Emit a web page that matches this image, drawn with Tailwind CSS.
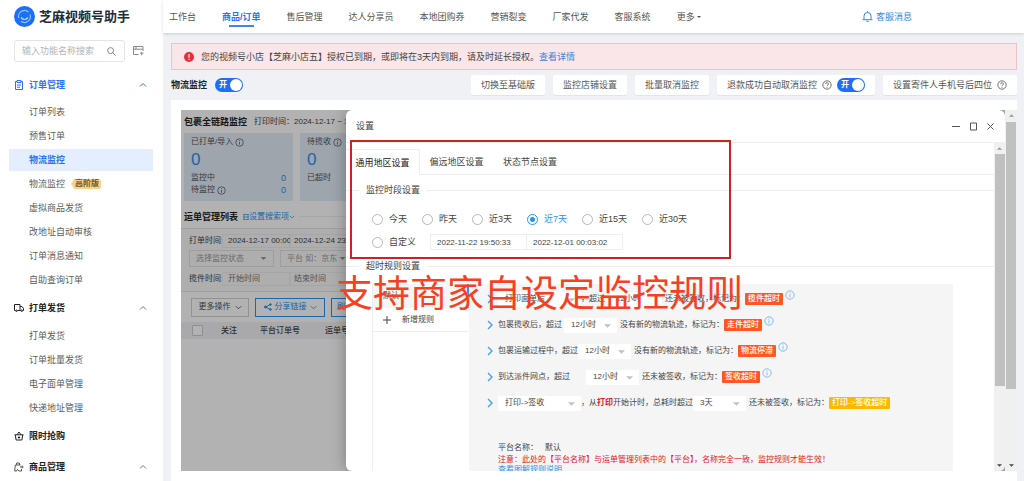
<!DOCTYPE html>
<html>
<head>
<meta charset="utf-8">
<title>芝麻视频号助手</title>
<script src="https://cdn.jsdelivr.net/npm/@tailwindcss/browser@4"></script>
</head>
<body class="bg-[#f0f1f5] font-['Liberation_Sans','Noto_Sans_CJK_SC',sans-serif] text-[9px] leading-[12px] text-[#555]">
<svg class="hidden">
  <symbol id="info" viewBox="0 0 12 12"><circle cx="6" cy="6" r="5" fill="none" stroke="currentColor"/><path d="M6 5.2v3.6M6 3v1.2" stroke="currentColor"/></symbol>
  <symbol id="help" viewBox="0 0 12 12"><circle cx="6" cy="6" r="5" fill="none" stroke="currentColor"/><path d="M4.4 4.9a1.6 1.6 0 1 1 2.3 1.4q-.7.4-.7 1M6 8.3v1" fill="none" stroke="currentColor"/></symbol>
  <symbol id="up" viewBox="0 0 8 8"><path d="M1 5.5 4 2.5 7 5.5" fill="none" stroke="currentColor"/></symbol>
  <symbol id="down" viewBox="0 0 8 8"><path d="M1 2.5 4 5.5 7 2.5" fill="none" stroke="currentColor"/></symbol>
  <symbol id="right" viewBox="0 0 8 10"><path d="M2 1 6 5 2 9" fill="none" stroke="currentColor" stroke-width="1.3"/></symbol>
  <symbol id="caret" viewBox="0 0 8 4"><path d="M0 0h8L4 4z" fill="currentColor"/></symbol>
  <symbol id="caretup" viewBox="0 0 8 4"><path d="M0 4h8L4 0z" fill="currentColor"/></symbol>
</svg>
<div class="flex h-screen overflow-hidden">
  <aside class="flex w-[163px] shrink-0 flex-col bg-white">
    <div class="flex h-[33px] shrink-0 items-center gap-1 pl-[14px]">
      <svg class="size-[21px]" viewBox="0 0 21 21"><circle cx="10.500" cy="10.500" r="10.500" fill="#1f6ff5"/><circle cx="10.500" cy="10.500" r="6" fill="none" stroke="#8fc0ff" stroke-width="1.200" stroke-dasharray="15 4" transform="rotate(-20 10.500 10.500)"/><path d="M7 11.500q3.500 4 7 0" fill="none" stroke="#bcd8ff" stroke-width="1.200"/></svg>
      <h1 class="text-[13px] font-bold leading-4 text-[#222b3a]">芝麻视频号助手</h1>
    </div>
    <div class="mt-[7px] flex shrink-0 items-center gap-2 pl-[14px]">
      <label class="flex h-[22px] w-[111px] items-center rounded-[3px] border border-[#e2e4e8] pr-2 pl-[7px]">
        <input aria-label="搜索" placeholder="输入功能名称搜索" class="min-w-0 flex-1 bg-transparent outline-none placeholder:text-[#b4b4b4]">
        <svg class="size-[9px] text-[#777]" viewBox="0 0 10 10" fill="none" stroke="currentColor"><circle cx="4" cy="4" r="3.300"/><path d="m6.500 6.500 3 3"/></svg>
      </label>
      <button aria-label="收藏"><svg class="h-[10px] w-[11px] text-[#888]" viewBox="0 0 11 10" fill="none" stroke="currentColor"><path d="M5.500 8.500H.5v-8h9.500V5M.5 3.200H10M3 .5v2.700M7 7.200h3.500M8.700 5.800v3.500"/></svg></button>
    </div>
    <nav class="mt-[7px]">
      <button class="flex h-8 w-full items-center pr-4 pl-[14px] font-bold text-[#2b73ee]"><svg class="mr-[5px] size-[10px]" viewBox="0 0 10 10" fill="none" stroke="currentColor"><path d="M3 1.500H1.500v8h7v-8H7M3 .5h4v2H3zM3 5h4M3 7.200h3"/></svg>订单管理<svg class="ml-auto size-2"><use href="#up"/></svg></button>
      <ul class="flex flex-col gap-[2px] pr-[10px] pl-[9px] text-[#5c5c5c]">
        <li><a href="#" class="flex h-[22px] items-center pl-5">订单列表</a></li>
        <li><a href="#" class="flex h-[22px] items-center pl-5">预售订单</a></li>
        <li><a href="#" class="flex h-[22px] items-center bg-[#e5eeff] pl-5 font-bold text-[#2b73ee]">物流监控</a></li>
        <li><a href="#" class="flex h-[22px] items-center pl-5">物流监控<svg class="ml-1.5 h-[6px] w-[2px]" viewBox="0 0 2 6"><path d="M2 0v6L0 3z" fill="#fad28c"/></svg><span class="rounded-[2px] bg-[#fad28c] px-[2px] text-[8px] font-bold leading-[10px] text-[#7a5320]">高阶版</span></a></li>
        <li><a href="#" class="flex h-[22px] items-center pl-5">虚拟商品发货</a></li>
        <li><a href="#" class="flex h-[22px] items-center pl-5">改地址自动审核</a></li>
        <li><a href="#" class="flex h-[22px] items-center pl-5">订单消息通知</a></li>
        <li><a href="#" class="flex h-[22px] items-center pl-5">自助查询订单</a></li>
      </ul>
      <button class="flex h-[34px] w-full items-center pr-4 pl-[14px] font-bold text-[#222]"><svg class="mr-[5px] size-[10px]" viewBox="0 0 10 10" fill="none" stroke="currentColor"><path d="M1.500 7.500H.5v-6h5.500v6H3.500M6 3.500h2l1.500 2v2H8.800M6 7.500h.8"/><circle cx="2.500" cy="7.700" r=".8"/><circle cx="7.700" cy="7.700" r=".8"/></svg>打单发货<svg class="ml-auto size-2 text-[#777]"><use href="#up"/></svg></button>
      <ul class="flex flex-col gap-[2px] pr-[10px] pl-[9px] text-[#5c5c5c]">
        <li><a href="#" class="flex h-[22px] items-center pl-5">打单发货</a></li>
        <li><a href="#" class="flex h-[22px] items-center pl-5">订单批量发货</a></li>
        <li><a href="#" class="flex h-[22px] items-center pl-5">电子面单管理</a></li>
        <li><a href="#" class="flex h-[22px] items-center pl-5">快递地址管理</a></li>
      </ul>
      <button class="flex h-[34px] w-full items-center pr-4 pl-[14px] font-bold text-[#222]"><svg class="mr-[5px] size-[10px]" viewBox="0 0 10 10" fill="none" stroke="currentColor"><path d="M.5 3.800h9M1.300 4l.8 5h5.800l.8-5M3 3.800 5 1l2 2.800M3.800 6.500h2.400M5 5.300v2.400"/></svg>限时抢购</button>
      <button class="flex h-7 w-full items-center pr-4 pl-[14px] font-bold text-[#222]"><svg class="mr-[5px] size-[10px]" viewBox="0 0 10 10" fill="none" stroke="#555"><path d="M6.500 3H1.300L.7 9h1.800l1-1.500L5 9h2.500V7M2.500 3V1h3v2M6 5h3.500M8.200 3.700v2.600"/></svg>商品管理<svg class="ml-auto size-2 text-[#777]"><use href="#up"/></svg></button>
    </nav>
  </aside>

  <div class="flex min-w-0 flex-1 flex-col">
    <header class="flex h-[33px] shrink-0 items-center bg-white pl-[6px] shadow-[0_1px_3px_rgba(0,0,0,0.15)]">
      <nav class="flex h-full items-center gap-[26px] whitespace-nowrap">
        <a href="#">工作台</a>
        <a href="#" class="relative font-bold text-[#2b73ee]">商品/订单<span class="absolute inset-x-[7px] -bottom-[4px] h-[2px] bg-[#3f86e8]"></span></a>
        <a href="#">售后管理</a>
        <a href="#">达人分享员</a>
        <a href="#">本地团购券</a>
        <a href="#">营销裂变</a>
        <a href="#">厂家代发</a>
        <a href="#">客服系统</a>
        <button class="flex items-center gap-[2px]">更多<svg class="h-[2px] w-1"><use href="#caret"/></svg></button>
      </nav>
      <a href="#" class="mr-28 ml-auto flex items-center gap-[3px] text-[#3c82dc]"><svg class="size-[11px]" viewBox="0 0 11 11" fill="none" stroke="currentColor"><path d="M.5 8.700h10M2 8.500V5a3.500 3.500 0 0 1 7 0v3.500M4.300 10.300h2.400M5.500.3v1.200"/></svg>客服消息</a>
    </header>

    <main class="flex min-h-0 flex-1 flex-col pt-[10px] pr-[7px] pl-2">
      <div role="alert" class="flex h-[27px] shrink-0 items-center border border-[#eec3c8] bg-[#fae6e8] pl-3 text-[#444]">
        <svg class="mr-[7px] size-[10px]" viewBox="0 0 10 10"><circle cx="5" cy="5" r="5" fill="#e8303a"/><path d="M5 2v3.800M5 6.800V8" stroke="#fff" stroke-width="1.100"/></svg>
        您的视频号小店【芝麻小店五】授权已到期，或即将在3天内到期，请及时延长授权。<a href="#" class="text-[#3c82dc]">查看详情</a>
      </div>
      <div class="my-[5px] flex h-5 shrink-0 items-center gap-2 text-[#555]">
        <h2 class="font-bold text-[#222]">物流监控</h2>
        <button role="switch" aria-checked="true" aria-label="物流监控" class="flex h-[14px] w-7 items-center justify-between rounded-full bg-[#1f6ff5] pr-[1px] pl-1 text-[8px] font-bold text-white">开<span class="size-3 rounded-full bg-white"></span></button>
        <div class="ml-auto flex gap-[8px]">
          <button class="h-5 rounded-[2px] bg-white px-[10px] shadow-2xs">切换至基础版</button>
          <button class="h-5 rounded-[2px] bg-white px-[10px] shadow-2xs">监控店铺设置</button>
          <button class="h-5 rounded-[2px] bg-white px-[10px] shadow-2xs">批量取消监控</button>
          <div class="flex h-5 items-center gap-[5px] rounded-[2px] bg-white px-[10px] shadow-2xs">退款成功自动取消监控<svg class="size-[10px]"><use href="#help"/></svg>
            <button role="switch" aria-checked="true" aria-label="退款成功自动取消监控" class="flex h-[14px] w-7 items-center justify-between rounded-full bg-[#1f6ff5] pr-[1px] pl-1 text-[8px] font-bold text-white">开<span class="size-3 rounded-full bg-white"></span></button>
          </div>
          <button class="flex h-5 items-center gap-[5px] rounded-[2px] bg-white px-[10px] shadow-2xs">设置寄件人手机号后四位<svg class="size-[10px]"><use href="#help"/></svg></button>
        </div>
      </div>

      <section class="flex min-h-0 flex-1 bg-white py-[10px] pl-[10px]">
        <div class="relative min-w-0 flex-1 overflow-hidden">
          <!-- dashboard behind the dialog -->
          <div class="h-full overflow-hidden bg-white text-[8px] whitespace-nowrap text-[#555]">
            <div class="flex h-[23px] items-center gap-[7px] pl-[3px] text-[#444]"><h3 class="text-[9px] font-bold text-[#222]">包裹全链路监控</h3>打印时间：2024-12-17 ~ 12-24</div>
            <div class="flex gap-[7px] pl-[3px]">
              <div class="h-[68px] w-[109px] shrink-0 bg-[#e2ecf6] px-[7px] pt-[3px]">
                <div class="flex items-center gap-[2px]">已打单/导入<svg class="size-[9px]"><use href="#info"/></svg></div>
                <div class="text-[17px] leading-6 text-[#2794f0]">0</div>
                <div class="flex justify-between">监控中<span class="text-[9px] text-[#2794f0]">0</span></div>
                <div class="flex items-center">待监控<svg class="ml-[2px] size-[9px]"><use href="#info"/></svg><span class="ml-auto text-[9px] text-[#2794f0]">0</span></div>
              </div>
              <div class="h-[68px] w-[109px] shrink-0 bg-[#e2ecf6] px-[7px] pt-[3px]">
                <div class="flex items-center gap-[2px]">待揽收<svg class="size-[9px]"><use href="#info"/></svg></div>
                <div class="text-[17px] leading-6 text-[#2794f0]">0</div>
                <div>已超时</div>
              </div>
            </div>
            <div class="flex h-[27px] items-center pt-[4px] pl-[3px] text-[#2794f0]"><h3 class="mr-[5px] text-[9px] font-bold text-[#222]">运单管理列表</h3><svg class="size-[6px]" viewBox="0 0 6 6" fill="none" stroke="currentColor" stroke-width=".7"><path d="M0 .5h6M0 3h6M0 5.500h6M1 .5v5M5 .5v5"/></svg>设置搜索项<svg class="size-[6px]"><use href="#down"/></svg><span class="ml-1 h-px w-60 bg-[#f0f0f0]"></span></div>
            <div class="border-y border-[#e6e6e6] bg-[#f9f9f9] pt-[2px] pl-2">
              <div class="flex h-[19px] items-center text-[#444]"><span class="w-[33px]">打单时间:</span><span class="w-[68px] border border-[#eee] pl-[5px]">2024-12-17 00:00</span><span class="w-40 border border-[#eee] pl-[3px]">2024-12-24 23:59</span></div>
              <div class="flex gap-[6px] text-[#999]">
                <span class="flex h-[17px] w-[85px] items-center justify-between border border-[#e2e2e2] px-[6px]">选择监控状态<svg class="h-[3px] w-[7px]"><use href="#caret"/></svg></span>
                <span class="flex h-[17px] w-[85px] items-center border border-[#e2e2e2] px-[6px]">平台 如：京东<svg class="ml-[2px] h-[3px] w-[7px]"><use href="#caret"/></svg></span>
              </div>
              <div class="flex h-[24px] items-center text-[#777]"><span class="w-[33px] text-[#444]">揽件时间:</span><span class="w-[68px] border border-[#eee] pl-[5px]">开始时间</span><span class="w-40 border border-[#eee] pl-[3px]">结束时间</span></div>
            </div>
            <div class="flex h-[30px] items-center gap-[6px] pl-[10px]">
              <button class="flex h-[19px] w-[58px] shrink-0 items-center justify-center gap-1 border border-[#d2d2d2]">更多操作<svg class="size-[7px]"><use href="#down"/></svg></button>
              <button class="flex h-[19px] w-[70px] shrink-0 items-center justify-center gap-[3px] border border-[#2794f0] text-[#2794f0]"><svg class="size-2" viewBox="0 0 8 8" fill="currentColor" stroke="currentColor"><path d="M6.500 1.500 1.500 4l5 2.500" fill="none"/><circle cx="1.500" cy="4" r="1"/><circle cx="6.500" cy="1.500" r=".8"/><circle cx="6.500" cy="6.500" r=".8"/></svg>分享链接<svg class="size-[7px]"><use href="#down"/></svg></button>
              <button class="h-[19px] w-[70px] shrink-0 border border-[#2794f0] pl-[5px] text-left text-[#2794f0]">刷新列表</button>
            </div>
            <table class="w-full bg-[#f2f3f5] text-left text-[#444]"><thead><tr class="h-[17px]">
              <th class="w-[33px] pl-[11px]"><input type="checkbox" aria-label="全选" class="block size-[11px] appearance-none rounded-[1px] border border-[#ccc] bg-white"></th>
              <th class="w-[40px] pl-[7px] font-medium">关注</th><th class="w-[66px] pl-[6px] font-medium">平台订单号</th><th class="pl-[5px] font-medium">运单号</th>
            </tr></thead></table>
          </div>
          <div class="absolute inset-0 bg-black/30"></div>

          <!-- settings dialog -->
          <div role="dialog" aria-label="设置" class="absolute inset-y-0 right-0 left-[165px] flex flex-col overflow-hidden rounded-[6px] bg-white text-[#444] shadow-[0_0_16px_rgba(0,0,0,0.3)]">
            <div class="flex h-[33px] shrink-0 items-center border-b border-[#f0f0f0] pr-[10px] pl-[10px]">
              设置
              <div class="ml-auto flex gap-2 text-[#555]">
                <button aria-label="最小化"><svg class="size-[9px]" viewBox="0 0 9 9"><path d="M0 4.500h8" stroke="currentColor"/></svg></button>
                <button aria-label="最大化"><svg class="size-[9px]" viewBox="0 0 9 9"><path d="M1.500 1h6v7h-6z" fill="none" stroke="currentColor"/></svg></button>
                <button aria-label="关闭"><svg class="size-[9px]" viewBox="0 0 9 9"><path d="m1.500 1.500 6 6m0-6-6 6" stroke="currentColor"/></svg></button>
              </div>
            </div>
            <div class="flex min-h-0 flex-1">
              <div class="min-w-0 flex-1 overflow-hidden pt-[6px] whitespace-nowrap">
                <div role="tablist" class="flex h-[26px]">
                  <button role="tab" aria-selected="true" class="w-[74px] border-t border-r border-[#eee] text-[#222]">通用地区设置</button>
                  <button role="tab" class="w-[73px] border-b border-[#eee]">偏远地区设置</button>
                  <button role="tab" class="w-[74px] border-b border-[#eee]">状态节点设置</button>
                  <span class="flex-1 border-b border-[#eee]"></span>
                </div>
                <div class="mt-[9px] flex items-center"><span class="h-px w-[13px] bg-[#eee]"></span><h4 class="px-[7px]">监控时段设置</h4><span class="h-px flex-1 bg-[#eee]"></span></div>
                <div class="mt-[17px] flex h-[12px] items-center gap-[15px] pl-[26px]">
                  <label class="flex items-center gap-[6px]"><input type="radio" name="period" class="size-[11px] appearance-none rounded-full border border-[#b8b8b8]">今天</label>
                  <label class="flex items-center gap-[6px]"><input type="radio" name="period" class="size-[11px] appearance-none rounded-full border border-[#b8b8b8]">昨天</label>
                  <label class="flex items-center gap-[6px]"><input type="radio" name="period" class="size-[11px] appearance-none rounded-full border border-[#b8b8b8]">近3天</label>
                  <label class="flex items-center gap-[6px] text-[#2794f0]"><input type="radio" name="period" checked class="size-[11px] appearance-none rounded-full border border-[#2794f0] bg-[#2794f0] bg-clip-content p-[2px]">近7天</label>
                  <label class="flex items-center gap-[6px]"><input type="radio" name="period" class="size-[11px] appearance-none rounded-full border border-[#b8b8b8]">近15天</label>
                  <label class="flex items-center gap-[6px]"><input type="radio" name="period" class="size-[11px] appearance-none rounded-full border border-[#b8b8b8]">近30天</label>
                </div>
                <div class="mt-[9px] flex h-4 items-center pl-[26px]">
                  <label class="mr-[14px] flex items-center gap-[6px]"><input type="radio" name="period" class="size-[11px] appearance-none rounded-full border border-[#b8b8b8]">自定义</label>
                  <input aria-label="开始时间" value="2022-11-22 19:50:33" class="h-4 w-[97px] border border-[#eee] pl-[6px] text-[8px]">
                  <input aria-label="结束时间" value="2022-12-01 00:03:02" class="-ml-px h-4 w-[97px] border border-[#eee] pl-[6px] text-[8px]">
                </div>
                <div class="mt-[10px] flex items-center"><span class="h-px w-[13px] bg-[#eee]"></span><h4 class="px-[7px]">超时规则设置</h4><span class="h-px flex-1 bg-[#eee]"></span></div>
                <div class="mt-[12px] mr-[41px] ml-[26px] flex h-60 text-[8px]">
                  <div class="w-[97px] border-l border-[#eee]">
                    <button class="block h-[24px] w-full border-r-2 border-[#2794f0] bg-[#f5f5f5] pl-[10px] text-left">默认</button>
                    <button class="flex h-[24px] w-full items-center border-b border-[#eee] pl-[10px]"><svg class="mr-[11px] size-2" viewBox="0 0 8 8"><path d="M4 0v8M0 4h8" stroke="currentColor"/></svg>新增规则</button>
                  </div>
                  <div class="flex-1 bg-[#f5f5f5] pt-[2px] pl-[17px]">
                    <div class="flex h-[26px] items-center"><svg class="mr-1 h-[10px] w-2 text-[#3da0ee]"><use href="#right"/></svg>
                      <label class="relative"><select aria-label="起始条件" class="block h-[15px] w-[83px] appearance-none bg-white pl-[7px]"><option>打印面单后</option></select><svg class="absolute top-[6px] right-[6px] h-1 w-[7px] text-[#c2c2c2]"><use href="#caret"/></svg></label>
                      <span class="mr-1">，超过</span>
                      <label class="relative"><select aria-label="时长" class="block h-[15px] w-[53px] appearance-none bg-white pl-[7px]"><option>12小时</option></select></label>
                      <span class="ml-[3px]">还未被签收，标记为：</span><b class="rounded-[1px] bg-[#ff5722] px-[3px] font-medium text-white">揽件超时</b><svg class="mb-2 ml-[2px] size-[10px] text-[#7db0f0]"><use href="#info"/></svg></div>
                    <div class="flex h-[26px] items-center"><svg class="mr-1 h-[10px] w-2 text-[#3da0ee]"><use href="#right"/></svg>包裹揽收后，超过
                      <label class="relative ml-[2px]"><select aria-label="时长" class="block h-[15px] w-[53px] appearance-none bg-white pl-[7px]"><option>12小时</option></select><svg class="absolute top-[6px] right-[6px] h-1 w-[7px] text-[#c2c2c2]"><use href="#caret"/></svg></label>
                      <span class="ml-[3px]">没有新的物流轨迹，标记为：</span><b class="rounded-[1px] bg-[#ff5722] px-[3px] font-medium text-white">走件超时</b><svg class="mb-2 ml-[2px] size-[10px] text-[#5eb0f0]"><use href="#info"/></svg></div>
                    <div class="flex h-[26px] items-center"><svg class="mr-1 h-[10px] w-2 text-[#3da0ee]"><use href="#right"/></svg>包裹运输过程中，超过
                      <label class="relative"><select aria-label="时长" class="block h-[15px] w-[53px] appearance-none bg-white pl-[7px]"><option>12小时</option></select><svg class="absolute top-[6px] right-[6px] h-1 w-[7px] text-[#c2c2c2]"><use href="#caret"/></svg></label>
                      <span class="ml-[3px]">没有新的物流轨迹，标记为：</span><b class="rounded-[1px] bg-[#ff5722] px-[3px] font-medium text-white">物流停滞</b><svg class="mb-2 ml-[2px] size-[10px] text-[#5eb0f0]"><use href="#info"/></svg></div>
                    <div class="flex h-[26px] items-center"><svg class="mr-1 h-[10px] w-2 text-[#3da0ee]"><use href="#right"/></svg>到达派件网点，超过
                      <label class="relative ml-4"><select aria-label="时长" class="block h-[15px] w-[53px] appearance-none bg-white pl-[7px]"><option>12小时</option></select><svg class="absolute top-[6px] right-[6px] h-1 w-[7px] text-[#c2c2c2]"><use href="#caret"/></svg></label>
                      <span class="ml-[3px]">还未被签收，标记为：</span><b class="rounded-[1px] bg-[#ff5722] px-[3px] font-medium text-white">签收超时</b><svg class="mb-2 ml-[2px] size-[10px] text-[#7db0f0]"><use href="#info"/></svg></div>
                    <div class="flex h-[26px] items-center"><svg class="mr-1 h-[10px] w-2 text-[#3da0ee]"><use href="#right"/></svg>
                      <label class="relative"><select aria-label="起始条件" class="block h-[15px] w-[83px] appearance-none bg-white pl-[7px]"><option>打印-&gt;签收</option></select><svg class="absolute top-[6px] right-[6px] h-1 w-[7px] text-[#c2c2c2]"><use href="#caret"/></svg></label>
                      <span>，从<b class="text-[#e02020]">打印</b>开始计时，总耗时超过</span>
                      <label class="relative"><select aria-label="时长" class="block h-[15px] w-[53px] appearance-none bg-white pl-[7px]"><option>3天</option></select><svg class="absolute top-[6px] right-[6px] h-1 w-[7px] text-[#c2c2c2]"><use href="#caret"/></svg></label>
                      <span class="ml-[3px]">还未被签收，标记为：</span><b class="rounded-[1px] bg-[#ffb800] px-[3px] font-medium text-white">打印-&gt;签收超时</b></div>
                    <div class="mt-[26px] pl-3">
                      <div class="flex gap-[7px]"><span>平台名称：</span><span>默认</span></div>
                      <p class="text-[#e02020]">注意：此处的【平台名称】与运单管理列表中的【平台】，名称完全一致，监控规则才能生效！</p>
                      <a href="#" class="block leading-[8px] text-[#2794f0]">查看图解规则说明</a>
                    </div>
                  </div>
                </div>
              </div>
              <div class="flex w-[11px] flex-col items-center bg-[#f0f0f0] pt-1 text-[#999]"><svg class="h-[3px] w-[5px]"><use href="#caretup"/></svg><span class="mt-1 h-[232px] w-[10px] bg-[#c0c0c0]"></span><svg class="mt-auto mb-1 h-[3px] w-[5px] text-[#444]"><use href="#caret"/></svg></div>
            </div>
          </div>

          <!-- highlight and caption -->
          <div class="pointer-events-none absolute top-[30px] left-[169px] h-[119px] w-[381px] border-2 border-[#cc241c]"></div>
          <p class="pointer-events-none absolute top-[161px] left-[155px] text-[37px] leading-[48px] whitespace-nowrap text-[#f54123]">支持商家自设定监控规则</p>
        </div>
        <div class="flex w-3 flex-col items-center bg-[#f0f0f0] pt-1 text-[#999]"><svg class="h-[3px] w-[5px]"><use href="#caretup"/></svg><span class="mt-[5px] h-[267px] w-[10px] bg-[#c0c0c0]"></span><svg class="mt-auto mb-1 h-[3px] w-[5px] text-[#444]"><use href="#caret"/></svg></div>
      </section>
    </main>
  </div>
</div>
</body>
</html>
